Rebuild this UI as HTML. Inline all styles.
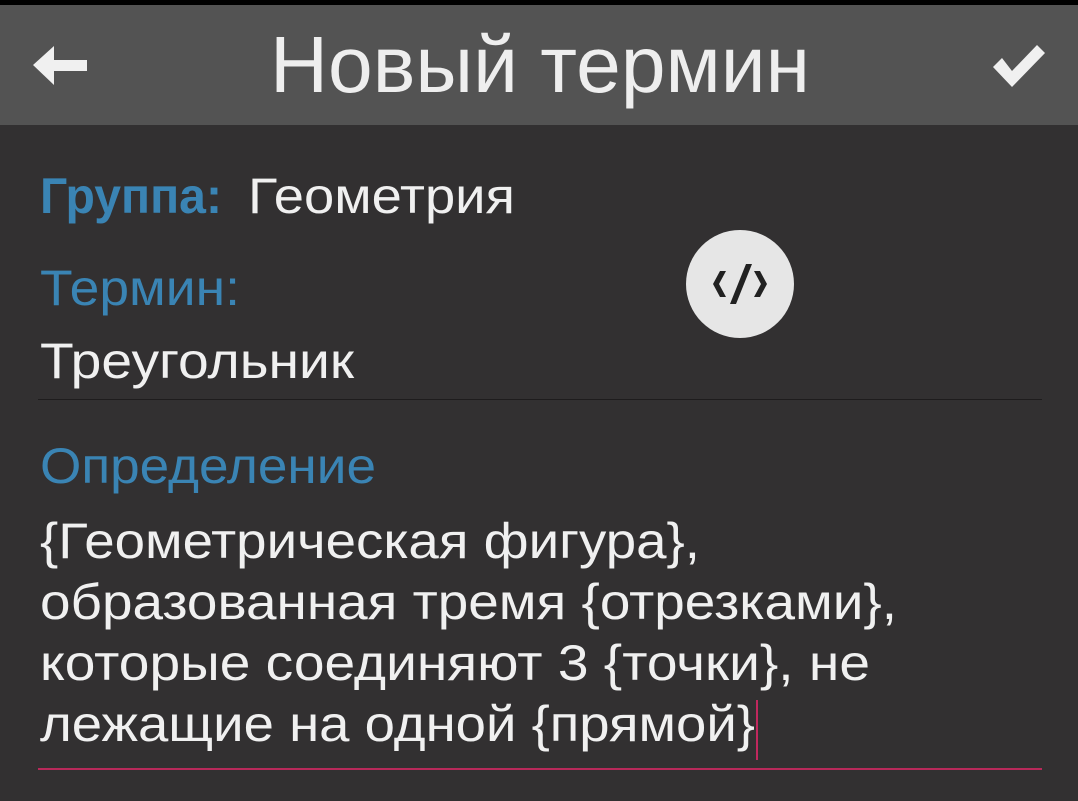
<!DOCTYPE html>
<html><head><meta charset="utf-8"><style>
html,body{margin:0;padding:0;background:#323031;width:1078px;height:801px;overflow:hidden}
svg{display:block}
text{font-family:"Liberation Sans",sans-serif}
</style></head><body>
<svg width="1078" height="801" viewBox="0 0 1078 801">
<rect width="1078" height="801" fill="#323031"/>
<rect width="1078" height="5" fill="#000"/>
<rect y="5" width="1078" height="120" fill="#535353"/>
<polygon points="33,65 54,46 54,60 87,60 87,71 54,71 54,85" fill="#f0f0f0"/>
<polygon points="993,67 1002,58 1012,71 1037,45 1045,53 1012,87" fill="#f0f0f0"/>
<text x="270" y="92" font-size="80" fill="#eeeeee" textLength="540" lengthAdjust="spacingAndGlyphs">Новый термин</text>
<text x="40" y="213" font-size="50" font-weight="bold" fill="#3a84b4" textLength="182" lengthAdjust="spacingAndGlyphs">Группа:</text>
<text x="248" y="213" font-size="50" fill="#f0f0f0" textLength="267" lengthAdjust="spacingAndGlyphs">Геометрия</text>
<text x="40" y="305" font-size="50" fill="#3a84b4" textLength="200" lengthAdjust="spacingAndGlyphs">Термин:</text>
<text x="40" y="378" font-size="50" fill="#f0f0f0" textLength="314" lengthAdjust="spacingAndGlyphs">Треугольник</text>
<rect x="38" y="399" width="1004" height="1" fill="#1e1c1d"/>
<text x="40" y="483" font-size="50" fill="#3a84b4" textLength="336" lengthAdjust="spacingAndGlyphs">Определение</text>
<text x="40" y="558" font-size="50" fill="#f0f0f0" textLength="660" lengthAdjust="spacingAndGlyphs">{Геометрическая фигура},</text>
<text x="40" y="619" font-size="50" fill="#f0f0f0" textLength="857" lengthAdjust="spacingAndGlyphs">образованная тремя {отрезками},</text>
<text x="40" y="680" font-size="50" fill="#f0f0f0" textLength="830" lengthAdjust="spacingAndGlyphs">которые соединяют 3 {точки}, не</text>
<text x="40" y="741" font-size="50" fill="#f0f0f0" textLength="715" lengthAdjust="spacingAndGlyphs">лежащие на одной {прямой}</text>
<rect x="756" y="700" width="2" height="60" fill="#c2285e"/>
<rect x="38" y="768" width="1004" height="2" fill="#b8295a"/>
<circle cx="740" cy="284" r="54" fill="#e6e6e6"/>
<polygon points="720,271 713,284 720,297 726,297 719,284 726,271" fill="#222"/>
<polygon points="760,271 767,284 760,297 754,297 761,284 754,271" fill="#222"/>
<polygon points="746,264 752,264 736,304 730,304" fill="#222"/>
</svg>
</body></html>
